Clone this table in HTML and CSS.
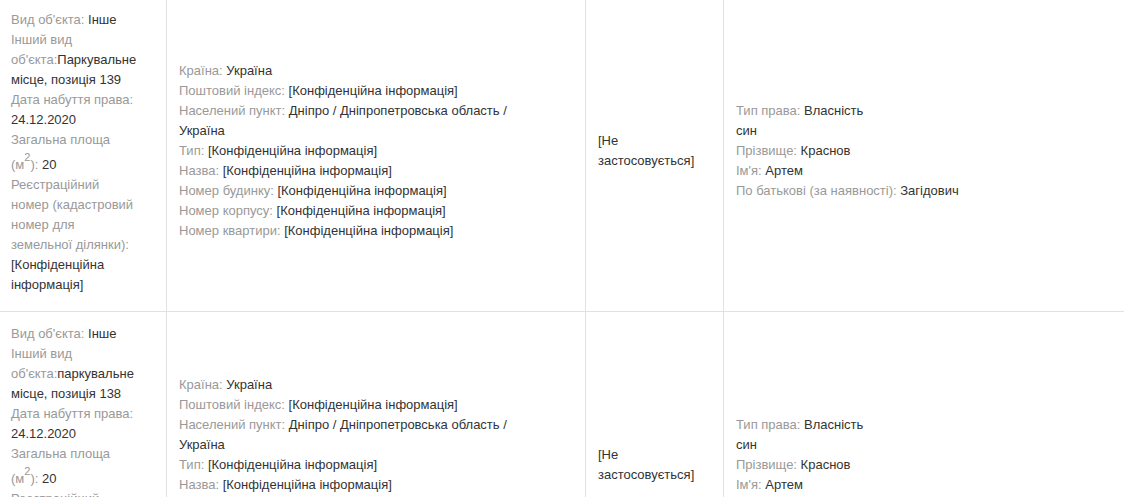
FILE: index.html
```
<!DOCTYPE html>
<html lang="uk">
<head>
	<meta charset="UTF-8">
	<title>Нерухоме майно</title>
	<link rel="stylesheet" href="styles.css">
</head>
<body>

	<!-- OBJECTS TABLE -->
	<table class="registry">
		<tr>
			<td class="col-object">
				<div><span class="label">Вид об'єкта:</span> Інше</div>
				<div><span class="label">Інший вид об'єкта:</span>Паркувальне місце, позиція 139</div>
				<div><span class="label">Дата набуття права:</span> 24.12.2020</div>
				<div><span class="label">Загальна площа (м<sup>2</sup>):</span> 20</div>
				<div><span class="label">Реєстраційний номер (кадастровий номер для земельної ділянки):</span> [Конфіденційна інформація]</div>
			</td>
			<td class="col-address">
				<div><span class="label">Країна:</span> Україна</div>
				<div><span class="label">Поштовий індекс:</span> [Конфіденційна інформація]</div>
				<div><span class="label">Населений пункт:</span> Дніпро / Дніпропетровська область / Україна</div>
				<div><span class="label">Тип:</span> [Конфіденційна інформація]</div>
				<div><span class="label">Назва:</span> [Конфіденційна інформація]</div>
				<div><span class="label">Номер будинку:</span> [Конфіденційна інформація]</div>
				<div><span class="label">Номер корпусу:</span> [Конфіденційна інформація]</div>
				<div><span class="label">Номер квартири:</span> [Конфіденційна інформація]</div>
			</td>
			<td class="col-cost">[Не застосовується]</td>
			<td class="col-owner">
				<div><span class="label">Тип права:</span> Власність</div>
				<div>син</div>
				<div><span class="label">Прізвище:</span> Краснов</div>
				<div><span class="label">Ім'я:</span> Артем</div>
				<div><span class="label">По батькові (за наявності):</span> Загідович</div>
			</td>
		</tr>
		<tr>
			<td class="col-object">
				<div><span class="label">Вид об'єкта:</span> Інше</div>
				<div><span class="label">Інший вид об'єкта:</span>паркувальне місце, позиція 138</div>
				<div><span class="label">Дата набуття права:</span> 24.12.2020</div>
				<div><span class="label">Загальна площа (м<sup>2</sup>):</span> 20</div>
				<div><span class="label">Реєстраційний номер (кадастровий номер для земельної ділянки):</span> [Конфіденційна інформація]</div>
			</td>
			<td class="col-address">
				<div><span class="label">Країна:</span> Україна</div>
				<div><span class="label">Поштовий індекс:</span> [Конфіденційна інформація]</div>
				<div><span class="label">Населений пункт:</span> Дніпро / Дніпропетровська область / Україна</div>
				<div><span class="label">Тип:</span> [Конфіденційна інформація]</div>
				<div><span class="label">Назва:</span> [Конфіденційна інформація]</div>
				<div><span class="label">Номер будинку:</span> [Конфіденційна інформація]</div>
				<div><span class="label">Номер корпусу:</span> [Конфіденційна інформація]</div>
				<div><span class="label">Номер квартири:</span> [Конфіденційна інформація]</div>
			</td>
			<td class="col-cost">[Не застосовується]</td>
			<td class="col-owner">
				<div><span class="label">Тип права:</span> Власність</div>
				<div>син</div>
				<div><span class="label">Прізвище:</span> Краснов</div>
				<div><span class="label">Ім'я:</span> Артем</div>
				<div><span class="label">По батькові (за наявності):</span> Загідович</div>
			</td>
		</tr>
	</table>

</body>
</html>
```

FILE: styles.css
```
* {
	margin: 0;
	padding: 0;
	box-sizing: border-box;
}

body {
	background: #fff;
	font-family: 'Liberation Sans', Arial, sans-serif;
	font-size: 13px;
	line-height: 20px;
	color: #333;
	overflow: hidden;
}

/* OBJECTS TABLE */
.registry {
	border-collapse: collapse;
	width: 1128px;
	margin: -3px 0 0 -2px;
	table-layout: fixed;
}

.registry td {
	border: 1px solid #e2e2e2;
	padding: 10px 12px 18px 12px;
	vertical-align: middle;
	text-align: left;
}

.registry .col-object {
	width: 168px;
	vertical-align: top;
	padding: 12px 28px 16px 12px;
}

.registry .col-address {
	width: 419px;
	padding-right: 40px;
}

.registry .col-cost {
	width: 138px;
}

.label {
	color: #999;
}

sup {
	font-size: 11px;
	line-height: 14px;
	vertical-align: 8px;
}
```
